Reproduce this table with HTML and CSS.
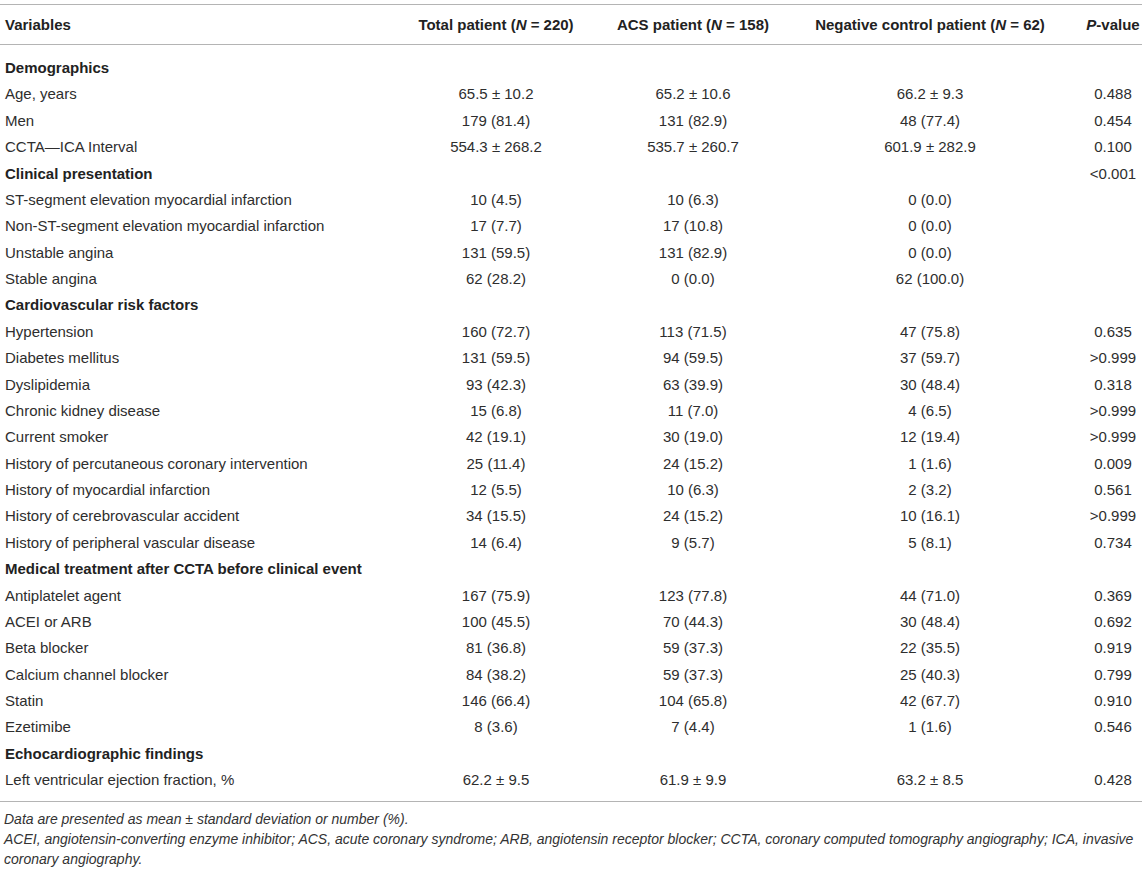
FILE: index.html
```html
<!DOCTYPE html>
<html lang="en">
<head>
<meta charset="utf-8">
<title>Table</title>
<link rel="stylesheet" href="styles.css">
</head>
<body>
<div class="page">
<table class="data">
  <colgroup>
    <col class="c-var">
    <col class="c-total">
    <col class="c-acs">
    <col class="c-neg">
    <col class="c-p">
  </colgroup>
  <thead>
    <tr>
      <th class="var">Variables</th>
      <th>Total patient (<i>N</i> = 220)</th>
      <th>ACS patient (<i>N</i> = 158)</th>
      <th>Negative control patient (<i>N</i> = 62)</th>
      <th><i>P</i>-value</th>
    </tr>
  </thead>
  <tbody>
    <tr class="section first"><td class="var">Demographics</td><td></td><td></td><td></td><td></td></tr>
    <tr><td class="var">Age, years</td><td>65.5 ± 10.2</td><td>65.2 ± 10.6</td><td>66.2 ± 9.3</td><td>0.488</td></tr>
    <tr><td class="var">Men</td><td>179 (81.4)</td><td>131 (82.9)</td><td>48 (77.4)</td><td>0.454</td></tr>
    <tr><td class="var">CCTA—ICA Interval</td><td>554.3 ± 268.2</td><td>535.7 ± 260.7</td><td>601.9 ± 282.9</td><td>0.100</td></tr>
    <tr class="section"><td class="var">Clinical presentation</td><td></td><td></td><td></td><td class="num">&lt;0.001</td></tr>
    <tr><td class="var">ST-segment elevation myocardial infarction</td><td>10 (4.5)</td><td>10 (6.3)</td><td>0 (0.0)</td><td></td></tr>
    <tr><td class="var">Non-ST-segment elevation myocardial infarction</td><td>17 (7.7)</td><td>17 (10.8)</td><td>0 (0.0)</td><td></td></tr>
    <tr><td class="var">Unstable angina</td><td>131 (59.5)</td><td>131 (82.9)</td><td>0 (0.0)</td><td></td></tr>
    <tr><td class="var">Stable angina</td><td>62 (28.2)</td><td>0 (0.0)</td><td>62 (100.0)</td><td></td></tr>
    <tr class="section"><td class="var">Cardiovascular risk factors</td><td></td><td></td><td></td><td></td></tr>
    <tr><td class="var">Hypertension</td><td>160 (72.7)</td><td>113 (71.5)</td><td>47 (75.8)</td><td>0.635</td></tr>
    <tr><td class="var">Diabetes mellitus</td><td>131 (59.5)</td><td>94 (59.5)</td><td>37 (59.7)</td><td>&gt;0.999</td></tr>
    <tr><td class="var">Dyslipidemia</td><td>93 (42.3)</td><td>63 (39.9)</td><td>30 (48.4)</td><td>0.318</td></tr>
    <tr><td class="var">Chronic kidney disease</td><td>15 (6.8)</td><td>11 (7.0)</td><td>4 (6.5)</td><td>&gt;0.999</td></tr>
    <tr><td class="var">Current smoker</td><td>42 (19.1)</td><td>30 (19.0)</td><td>12 (19.4)</td><td>&gt;0.999</td></tr>
    <tr><td class="var">History of percutaneous coronary intervention</td><td>25 (11.4)</td><td>24 (15.2)</td><td>1 (1.6)</td><td>0.009</td></tr>
    <tr><td class="var">History of myocardial infarction</td><td>12 (5.5)</td><td>10 (6.3)</td><td>2 (3.2)</td><td>0.561</td></tr>
    <tr><td class="var">History of cerebrovascular accident</td><td>34 (15.5)</td><td>24 (15.2)</td><td>10 (16.1)</td><td>&gt;0.999</td></tr>
    <tr><td class="var">History of peripheral vascular disease</td><td>14 (6.4)</td><td>9 (5.7)</td><td>5 (8.1)</td><td>0.734</td></tr>
    <tr class="section"><td class="var">Medical treatment after CCTA before clinical event</td><td></td><td></td><td></td><td></td></tr>
    <tr><td class="var">Antiplatelet agent</td><td>167 (75.9)</td><td>123 (77.8)</td><td>44 (71.0)</td><td>0.369</td></tr>
    <tr><td class="var">ACEI or ARB</td><td>100 (45.5)</td><td>70 (44.3)</td><td>30 (48.4)</td><td>0.692</td></tr>
    <tr><td class="var">Beta blocker</td><td>81 (36.8)</td><td>59 (37.3)</td><td>22 (35.5)</td><td>0.919</td></tr>
    <tr><td class="var">Calcium channel blocker</td><td>84 (38.2)</td><td>59 (37.3)</td><td>25 (40.3)</td><td>0.799</td></tr>
    <tr><td class="var">Statin</td><td>146 (66.4)</td><td>104 (65.8)</td><td>42 (67.7)</td><td>0.910</td></tr>
    <tr><td class="var">Ezetimibe</td><td>8 (3.6)</td><td>7 (4.4)</td><td>1 (1.6)</td><td>0.546</td></tr>
    <tr class="section"><td class="var">Echocardiographic findings</td><td></td><td></td><td></td><td></td></tr>
    <tr class="last"><td class="var">Left ventricular ejection fraction, %</td><td>62.2 ± 9.5</td><td>61.9 ± 9.9</td><td>63.2 ± 8.5</td><td>0.428</td></tr>
  </tbody>
</table>
<div class="notes">
  <p>Data are presented as mean ± standard deviation or number (%).</p>
  <p>ACEI, angiotensin-converting enzyme inhibitor; ACS, acute coronary syndrome; ARB, angiotensin receptor blocker; CCTA, coronary computed tomography angiography; ICA, invasive coronary angiography.</p>
</div>
</div>
</body>
</html>
```

FILE: styles.css
```css
html, body {
  margin: 0;
  padding: 0;
  background: #ffffff;
}

body {
  font-family: "Liberation Sans", Arial, Helvetica, sans-serif;
  font-size: 15px;
  color: #2e2e2e;
}

.page {
  width: 1142px;
  padding-top: 4px;
}

.data {
  width: 1142px;
  table-layout: fixed;
  border-collapse: collapse;
}

.c-var { width: 382px; }
.c-total { width: 228px; }
.c-acs { width: 166px; }
.c-neg { width: 308px; }
.c-p { width: 58px; }

.data th,
.data td {
  padding: 4.2px 0;
  line-height: 18px;
  text-align: center;
  white-space: nowrap;
  vertical-align: middle;
}

.data th {
  font-weight: bold;
  color: #222222;
  padding-top: 10.5px;
  padding-bottom: 10.5px;
  border-top: 1px solid #b4b4b4;
  border-bottom: 1px solid #b4b4b4;
}

.data th i {
  font-style: italic;
}

.data .var {
  text-align: left;
  padding-left: 5px;
}

.data .section .var {
  font-weight: bold;
  color: #222222;
}

.data .first td {
  padding-top: 14px;
}

.data .last td {
  padding-bottom: 12.2px;
  border-bottom: 1px solid #b4b4b4;
}

.notes {
  padding-left: 4px;
  margin-top: 7px;
}

.notes p {
  margin: 0;
  font-size: 14px;
  font-style: italic;
  line-height: 20px;
  color: #333333;
}
```
